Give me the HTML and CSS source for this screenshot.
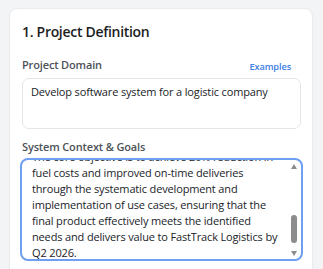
FILE: index.html
```html
<!DOCTYPE html>
<html lang="en">

<head>
    <meta charset="UTF-8">
    <meta name="viewport" content="width=device-width, initial-scale=1.0">
    <title>Project Definition</title>
    <link rel="stylesheet" href="styles.css">
</head>

<body>
    <section class="card">
        <h2 class="card-title">1. Project Definition</h2>

        <div class="field">
            <div class="field-head">
                <label>Project Domain</label>
                <a href="#" class="examples">Examples</a>
            </div>
            <div class="box">Develop software system for a logistic company</div>
        </div>

        <div class="field">
            <div class="field-head">
                <label>System Context &amp; Goals</label>
            </div>
            <div class="box box-focus">
                <div class="scroll-text">
                    The core objective is to achieve 20% reduction in<br>
                    fuel costs and improved on-time deliveries<br>
                    through the systematic development and<br>
                    implementation of use cases, ensuring that the<br>
                    final product effectively meets the identified<br>
                    needs and delivers value to FastTrack Logistics by<br>
                    Q2 2026.
                </div>
                <div class="scrollbar">
                    <span class="arrow up"></span>
                    <span class="thumb"></span>
                    <span class="arrow down"></span>
                </div>
            </div>
        </div>
    </section>
</body>

</html>
```

FILE: styles.css
```css
body {
    margin: 0;
    padding: 8px 10px 0 9px;
    background: #f3f4f6;
    font-family: 'Open Sans', 'Noto Sans', sans-serif;
    height: 269px;
    box-sizing: border-box;
    overflow: hidden;
}

.card {
    background: #ffffff;
    border: 1px solid #e9ebee;
    border-radius: 8px;
    padding: 14px 11px 20px 12px;
    height: 300px;
}

.card-title {
    margin: 0 0 17px 0;
    font-size: 14px;
    line-height: 18px;
    letter-spacing: -0.3px;
    font-weight: 600;
    color: #1b1d21;
}

.field {
    margin-bottom: 11px;
}

.field-head {
    display: flex;
    justify-content: space-between;
    align-items: flex-start;
    margin-bottom: 4px;
}

.field-head label {
    font-size: 11px;
    line-height: 14px;
    letter-spacing: -0.15px;
    font-weight: 600;
    color: #4d5259;
}

.examples {
    font-size: 9.2px;
    line-height: 14px;
    padding-top: 2px;
    letter-spacing: -0.1px;
    font-weight: 600;
    color: #3d80e6;
    text-decoration: none;
    margin-right: 10px;
}

.box {
    position: relative;
    border: 1px solid #e3e5e8;
    border-radius: 7px;
    padding: 5px 8px;
    height: 51px;
    box-sizing: border-box;
    font-size: 11px;
    line-height: 16px;
    letter-spacing: -0.15px;
    color: #202328;
    white-space: nowrap;
}

.box-focus {
    height: 103px;
    margin: 0 -2px;
    border: 2px solid #6e9ff0;
    border-radius: 8px;
    padding: 0 20px 0 10px;
    overflow: hidden;
}

.scroll-text {
    margin-top: -11px;
}

.scrollbar {
    position: absolute;
    top: 0;
    right: 1px;
    bottom: 0;
    width: 12px;
    display: flex;
    flex-direction: column;
    align-items: center;
}

.arrow {
    width: 0;
    height: 0;
    border-left: 3.5px solid transparent;
    border-right: 3.5px solid transparent;
}

.arrow.up {
    border-bottom: 5px solid #8c8c8c;
    margin-top: 4px;
}

.arrow.down {
    border-top: 5px solid #8c8c8c;
    margin-bottom: 3px;
}

.thumb {
    width: 6px;
    height: 28px;
    border-radius: 3px;
    background: #8c8c8c;
    margin-top: auto;
    margin-bottom: 8px;
}
```
